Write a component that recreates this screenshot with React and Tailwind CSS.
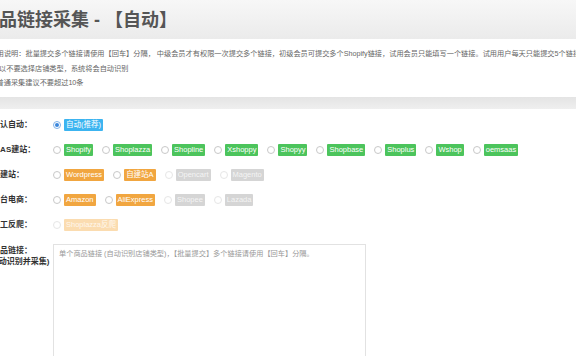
import React from "react";

const F = { fontFamily: '"Liberation Sans", "Noto Sans CJK SC", sans-serif' };

function Radio({ checked, disabled }) {
  if (checked) {
    return (
      <span className="flex h-[8px] w-[8px] shrink-0 items-center justify-center rounded-full border border-[#7fb2e8] bg-white">
        <span className="h-[4px] w-[4px] rounded-full bg-[#3a86dc]" />
      </span>
    );
  }
  return (
    <span
      className={
        "h-[8px] w-[8px] shrink-0 rounded-full border bg-white " +
        (disabled ? "border-[#e6e6e6]" : "border-[#c8c8c8]")
      }
    />
  );
}

const COLORS = {
  blue: "bg-[#3cb4f0] text-white",
  green: "bg-[#4cc45c] text-white",
  orange: "bg-[#f1a640] text-white",
  gray: "bg-[#d5d5d5] text-[#f4f4f4]",
  pale: "bg-[#fbdcb0] text-[#fff7ec]",
};

function Opt({ label, color, checked, disabled }) {
  return (
    <div className="mr-[9px] flex items-center gap-[3px]">
      <Radio checked={checked} disabled={disabled} />
      <span className={"rounded-[1px] px-[2px] text-[7.5px] leading-[11.5px] whitespace-nowrap " + COLORS[color]}>
        {label}
      </span>
    </div>
  );
}

function Row({ label, children }) {
  return (
    <div className="flex h-[25px] items-center">
      <div className="w-[61px] shrink-0 text-[8px] font-bold text-[#333] whitespace-nowrap">{label}</div>
      <div className="flex items-center">{children}</div>
    </div>
  );
}

export default function App() {
  return (
    <div className="h-[356px] w-[576px] overflow-hidden bg-[#ececec]" style={F}>
      <div className="flex h-[39px] items-center bg-gradient-to-b from-[#f7f7f7] to-[#ebebeb]">
        <div className="-ml-[19px] text-[18px] font-bold leading-[24px] whitespace-nowrap text-[#555]">
          商品链接采集 - 【自动】
        </div>
      </div>
      <div className="bg-white pt-[8px] pb-[6px] text-[7.2px] leading-[14.6px] text-[#666] whitespace-nowrap">
        <div className="-ml-[10.5px]">
          使用说明：批量提交多个链接请使用【回车】分隔， 中级会员才有权限一次提交多个链接，初级会员可提交多个Shopify链接，试用会员只能填写一个链接。试用用户每天只能提交5个链接
        </div>
        <div className="-ml-[1px]">以不要选择店铺类型，系统将会自动识别</div>
        <div className="-ml-[3.5px]">普通采集建议不要超过10条</div>
      </div>
      <div className="h-[12px] bg-gradient-to-b from-[#e4e4e4] to-[#efefef]" />
      <div className="h-[300px] bg-white pt-[3.5px]">
        <div className="-ml-[8px]">
          <Row label="默认自动：">
            <Opt label="自动(推荐)" color="blue" checked />
          </Row>
          <Row label={<span className="-ml-[3px]">SAAS建站：</span>}>
            <Opt label="Shopify" color="green" />
            <Opt label="Shoplazza" color="green" />
            <Opt label="Shopline" color="green" />
            <Opt label="Xshoppy" color="green" />
            <Opt label="Shopyy" color="green" />
            <Opt label="Shopbase" color="green" />
            <Opt label="Shoplus" color="green" />
            <Opt label="Wshop" color="green" />
            <Opt label="oemsaas" color="green" />
          </Row>
          <Row label="自建站：">
            <Opt label="Wordpress" color="orange" />
            <Opt label="自建站A" color="orange" />
            <Opt label="Opencart" color="gray" disabled />
            <Opt label="Magento" color="gray" disabled />
          </Row>
          <Row label="平台电商：">
            <Opt label="Amazon" color="orange" />
            <Opt label="AliExpress" color="orange" />
            <Opt label="Shopee" color="gray" disabled />
            <Opt label="Lazada" color="gray" disabled />
          </Row>
          <Row label="人工反爬：">
            <Opt label="Shoplazza反爬" color="pale" disabled />
          </Row>
          <div className="mt-[6.5px] flex">
            <div className="w-[61px] shrink-0 pt-[1px] text-[8px] font-bold leading-[11.5px] text-[#333] whitespace-nowrap">
              <div>商品链接：</div>
              <div className="-ml-[4px]">(自动识别并采集)</div>
            </div>
            <div className="h-[140px] w-[313px] border border-[#e2e2e2] px-[5px] pt-[4px] text-[7.2px] leading-[10px] text-[#999]">
              单个商品链接 (自动识别店铺类型)，【批量提交】多个链接请使用【回车】分隔。
            </div>
          </div>
        </div>
      </div>
    </div>
  );
}
